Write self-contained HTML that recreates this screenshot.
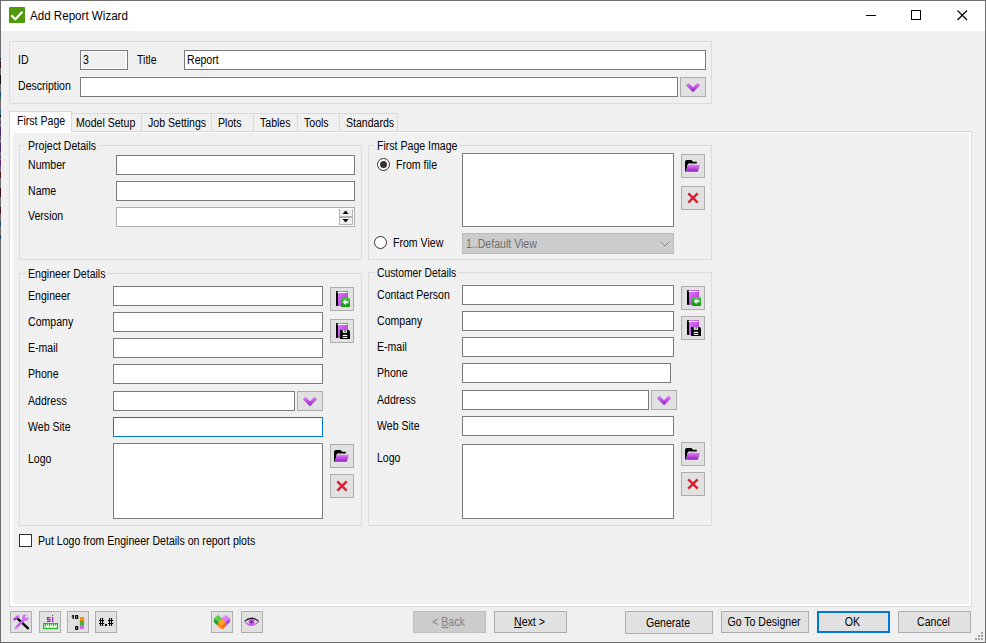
<!DOCTYPE html>
<html><head><meta charset="utf-8"><style>
*{box-sizing:border-box}
html,body{margin:0;padding:0}
body{width:986px;height:643px;position:relative;overflow:hidden;background:#f0f0f0;font-family:"Liberation Sans",sans-serif;color:#000}
div{position:absolute}
svg{position:absolute}
.l{font-size:12px;line-height:13px;white-space:nowrap;transform:scaleX(0.88);transform-origin:0 0}
.tb{background:#fff;border:1px solid #7a7a7a}
.btn{background:#e1e1e1;border:1px solid #adadad}
.grp{border:1px solid #dcdcdc}
.leg{height:3px;background:#f0f0f0}
.tab{background:#f0f0f0;border:1px solid #d9d9d9;border-bottom:none}
.rad{border:1px solid #333;border-radius:50%;background:#fff}
.bt{font-size:12px;line-height:13px;transform:scaleX(0.88);transform-origin:50% 0;white-space:nowrap;text-align:center;width:100%;left:-1px}
</style></head>
<body>
<svg width="0" height="0" style="left:0;top:0"><defs><linearGradient id="gp" x1="0" y1="0" x2="0" y2="1"><stop offset="0" stop-color="#e47cff"/><stop offset="1" stop-color="#9020c0"/></linearGradient><linearGradient id="gb" x1="0" y1="0" x2="1" y2="1"><stop offset="0" stop-color="#e078ff"/><stop offset="1" stop-color="#a830d0"/></linearGradient><linearGradient id="gg" x1="0" y1="0" x2="0" y2="1"><stop offset="0" stop-color="#48c848"/><stop offset="1" stop-color="#129012"/></linearGradient></defs></svg>
<div style="left:0;top:0;width:986px;height:643px;border:1px solid #6e6e6e"></div>
<div style="left:1px;top:1px;width:984px;height:30px;background:#fff"></div>
<div style="left:9px;top:7px;width:16px;height:16px;background:#4f9a0b;border-radius:1px"></div>
<svg style="left:9px;top:7px" width="16" height="16" viewBox="0 0 16 16"><path d="M2.35 8.4 L6.4 12.2 L13.4 4.7" stroke="#fff" stroke-width="2.2" fill="none"/></svg>
<div style="left:30px;top:10px;font-size:12px;line-height:13px;white-space:nowrap;transform:scaleX(0.966);transform-origin:0 0">Add Report Wizard</div>
<div style="left:866px;top:15px;width:10px;height:1px;background:#000"></div>
<div style="left:911px;top:10px;width:10px;height:10px;border:1px solid #000"></div>
<svg style="left:957px;top:10px" width="11" height="11" viewBox="0 0 11 11"><path d="M0.5 0.5 L10 10 M10 0.5 L0.5 10" stroke="#000" stroke-width="1.15" fill="none"/></svg>
<div class="grp" style="left:9px;top:41px;width:703px;height:63px"></div>
<div class="l" style="left:18px;top:54px;">ID</div>
<div class="tb" style="left:80px;top:50px;width:48px;height:20px;background:#f0f0f0;box-shadow:inset 0 0 0 1px #fff"></div>
<div class="l" style="left:83px;top:54px;">3</div>
<div class="l" style="left:137px;top:54px;">Title</div>
<div class="tb" style="left:184px;top:50px;width:522px;height:20px;"></div>
<div class="l" style="left:187px;top:54px;">Report</div>
<div class="l" style="left:18px;top:80px;">Description</div>
<div class="tb" style="left:80px;top:77px;width:598px;height:20px;"></div>
<div class="btn" style="left:680px;top:77px;width:26px;height:20px;"><svg width="26" height="20" viewBox="0 0 26 20" style="left:-1px;top:-1px"><path d="M6 8.5 L8.5 5.8 L13 10.3 L17.5 5.8 L20 8.5 L13 15.2 Z" fill="url(#gp)"/></svg></div>
<div style="left:9px;top:131px;width:963px;height:476px;border:1px solid #d9d9d9;background:#fff"></div>
<div style="left:13px;top:133px;width:956px;height:471px;background:#f0f0f0"></div>
<div class="tab" style="left:71px;top:113px;width:71px;height:18px"></div>
<div class="l" style="left:76px;top:117px;">Model Setup</div>
<div class="tab" style="left:141px;top:113px;width:71px;height:18px"></div>
<div class="l" style="left:148px;top:117px;">Job Settings</div>
<div class="tab" style="left:211px;top:113px;width:43px;height:18px"></div>
<div class="l" style="left:218px;top:117px;">Plots</div>
<div class="tab" style="left:253px;top:113px;width:45px;height:18px"></div>
<div class="l" style="left:260px;top:117px;">Tables</div>
<div class="tab" style="left:297px;top:113px;width:43px;height:18px"></div>
<div class="l" style="left:304px;top:117px;">Tools</div>
<div class="tab" style="left:339px;top:113px;width:59px;height:18px"></div>
<div class="l" style="left:346px;top:117px;">Standards</div>
<div style="left:9px;top:111px;width:63px;height:21px;background:#fff;border:1px solid #d9d9d9;border-bottom:none"></div>
<div style="left:10px;top:131px;width:61px;height:2px;background:#fff"></div>
<div class="l" style="left:17px;top:115px;">First Page</div>
<div class="grp" style="left:19px;top:145px;width:343px;height:115px"></div>
<div class="leg" style="left:26px;top:145px;width:72px"></div>
<div class="l" style="left:28px;top:140px;">Project Details</div>
<div class="l" style="left:28px;top:159px;">Number</div>
<div class="tb" style="left:116px;top:155px;width:239px;height:20px;"></div>
<div class="l" style="left:28px;top:185px;">Name</div>
<div class="tb" style="left:116px;top:181px;width:239px;height:20px;"></div>
<div class="l" style="left:28px;top:210px;">Version</div>
<div class="tb" style="left:116px;top:207px;width:239px;height:20px;border-color:#abadb3"></div>
<div style="left:339px;top:209px;width:14px;height:16px;background:#efefef;border:1px solid #b4b4b4;border-top:none"></div>
<div style="left:339px;top:216px;width:14px;height:2px;background:#b4b4b4"></div>
<svg style="left:339px;top:204px" width="14" height="22"><path d="M3.6 10 L9.6 10 L6.6 6.6 Z M3.6 15.1 L9.6 15.1 L6.6 18.4 Z" fill="#000"/></svg>
<div class="grp" style="left:368px;top:145px;width:344px;height:115px"></div>
<div class="leg" style="left:375px;top:145px;width:83px"></div>
<div class="l" style="left:377px;top:140px;">First Page Image</div>
<div class="rad" style="left:377px;top:158px;width:13px;height:13px"></div>
<div style="left:380px;top:161px;width:7px;height:7px;border-radius:50%;background:#333"></div>
<div class="l" style="left:396px;top:159px;">From file</div>
<div class="tb" style="left:462px;top:153px;width:212px;height:74px;"></div>
<div class="btn" style="left:681px;top:154px;width:24px;height:24px;"><svg width="24" height="24" viewBox="0 0 24 24" style="left:-1px;top:-1px"><path d="M4 17.5 L4 8 Q4 6 6 6 L10.5 6 L12 7.8 L15.8 7.8 L15.8 9.6 L7 9.6 L5 17.5 Z" fill="#000"/><path d="M6.6 10.8 L19 10.8 L16.8 17.7 L5 17.7 Z" fill="url(#gp)"/></svg></div>
<div class="btn" style="left:681px;top:186px;width:24px;height:24px;"><svg width="24" height="24" viewBox="0 0 24 24" style="left:-1px;top:-1px"><path d="M7.3 7.3 L16.7 16.7 M16.7 7.3 L7.3 16.7" stroke="#d81e32" stroke-width="2.4" fill="none"/></svg></div>
<div class="rad" style="left:374px;top:236px;width:13px;height:13px"></div>
<div class="l" style="left:393px;top:237px;">From View</div>
<div class="" style="left:462px;top:233px;width:212px;height:21px;background:#cccccc;border:1px solid #bcbcbc"></div>
<div class="l" style="left:466px;top:238px;color:#6d6d6d">1..Default View</div>
<svg style="left:660px;top:240px" width="10" height="8"><path d="M0.5 1.5 L5 6 L9.5 1.5" stroke="#8a8a8a" fill="none"/></svg>
<div class="grp" style="left:19px;top:273px;width:343px;height:253px"></div>
<div class="leg" style="left:26px;top:273px;width:81px"></div>
<div class="l" style="left:28px;top:268px;">Engineer Details</div>
<div class="l" style="left:28px;top:290px;">Engineer</div>
<div class="tb" style="left:113px;top:286px;width:210px;height:20px;"></div>
<div class="l" style="left:28px;top:316px;">Company</div>
<div class="tb" style="left:113px;top:312px;width:210px;height:20px;"></div>
<div class="l" style="left:28px;top:342px;">E-mail</div>
<div class="tb" style="left:113px;top:338px;width:210px;height:20px;"></div>
<div class="l" style="left:28px;top:368px;">Phone</div>
<div class="tb" style="left:113px;top:364px;width:210px;height:20px;"></div>
<div class="l" style="left:28px;top:395px;">Address</div>
<div class="tb" style="left:113px;top:391px;width:182px;height:20px;"></div>
<div class="btn" style="left:297px;top:391px;width:26px;height:20px;"><svg width="26" height="20" viewBox="0 0 26 20" style="left:-1px;top:-1px"><path d="M6 8.5 L8.5 5.8 L13 10.3 L17.5 5.8 L20 8.5 L13 15.2 Z" fill="url(#gp)"/></svg></div>
<div class="l" style="left:28px;top:421px;">Web Site</div>
<div class="tb" style="left:113px;top:417px;width:210px;height:20px;border-color:#0078d7"></div>
<div class="l" style="left:28px;top:453px;">Logo</div>
<div class="tb" style="left:113px;top:443px;width:210px;height:76px;"></div>
<div class="btn" style="left:330px;top:287px;width:24px;height:24px;"><svg width="24" height="24" viewBox="0 0 24 24" style="left:-1px;top:-1px"><rect x="6" y="4" width="2.2" height="15" rx="0.8" fill="#000"/><rect x="8" y="4" width="10" height="15" fill="url(#gb)"/><rect x="7.5" y="5" width="9.7" height="1" fill="#fff"/><rect x="11" y="11" width="9" height="9" rx="0.8" fill="url(#gg)"/><path d="M12.8 15.3 L15.6 12.3 L15.6 14.3 L18.4 14.3 L18.4 16.3 L15.6 16.3 L15.6 18.3 Z" fill="#fff"/></svg></div>
<div class="btn" style="left:330px;top:319px;width:24px;height:24px;"><svg width="24" height="24" viewBox="0 0 24 24" style="left:-1px;top:-1px"><rect x="6" y="4" width="2.2" height="15" rx="0.8" fill="#000"/><rect x="8" y="4" width="10" height="15" fill="url(#gb)"/><rect x="7.5" y="5" width="9.7" height="1" fill="#fff"/><path d="M10 11 L18.8 11 L20 12.2 L20 20 L10 20 Z" fill="#000"/><rect x="12.8" y="11" width="4.2" height="2.8" fill="#fff"/><rect x="14.6" y="11" width="1" height="2" fill="#000"/><rect x="12.8" y="15.8" width="4.4" height="3.2" fill="#fff"/><rect x="12.8" y="17" width="4.4" height="0.9" fill="#000"/></svg></div>
<div class="btn" style="left:330px;top:444px;width:24px;height:24px;"><svg width="24" height="24" viewBox="0 0 24 24" style="left:-1px;top:-1px"><path d="M4 17.5 L4 8 Q4 6 6 6 L10.5 6 L12 7.8 L15.8 7.8 L15.8 9.6 L7 9.6 L5 17.5 Z" fill="#000"/><path d="M6.6 10.8 L19 10.8 L16.8 17.7 L5 17.7 Z" fill="url(#gp)"/></svg></div>
<div class="btn" style="left:330px;top:474px;width:24px;height:24px;"><svg width="24" height="24" viewBox="0 0 24 24" style="left:-1px;top:-1px"><path d="M7.3 7.3 L16.7 16.7 M16.7 7.3 L7.3 16.7" stroke="#d81e32" stroke-width="2.4" fill="none"/></svg></div>
<div class="grp" style="left:368px;top:272px;width:344px;height:254px"></div>
<div class="leg" style="left:375px;top:272px;width:83px"></div>
<div class="l" style="left:377px;top:267px;transform:scaleX(0.86)">Customer Details</div>
<div class="l" style="left:377px;top:289px;">Contact Person</div>
<div class="tb" style="left:462px;top:285px;width:212px;height:20px;"></div>
<div class="l" style="left:377px;top:315px;">Company</div>
<div class="tb" style="left:462px;top:311px;width:212px;height:20px;"></div>
<div class="l" style="left:377px;top:341px;">E-mail</div>
<div class="tb" style="left:462px;top:337px;width:212px;height:20px;"></div>
<div class="l" style="left:377px;top:367px;">Phone</div>
<div class="tb" style="left:462px;top:363px;width:209px;height:20px;"></div>
<div class="l" style="left:377px;top:394px;">Address</div>
<div class="tb" style="left:462px;top:390px;width:187px;height:20px;"></div>
<div class="btn" style="left:651px;top:390px;width:26px;height:20px;"><svg width="26" height="20" viewBox="0 0 26 20" style="left:-1px;top:-1px"><path d="M6 8.5 L8.5 5.8 L13 10.3 L17.5 5.8 L20 8.5 L13 15.2 Z" fill="url(#gp)"/></svg></div>
<div class="l" style="left:377px;top:420px;">Web Site</div>
<div class="tb" style="left:462px;top:416px;width:212px;height:20px;"></div>
<div class="l" style="left:377px;top:452px;">Logo</div>
<div class="tb" style="left:462px;top:444px;width:212px;height:75px;"></div>
<div class="btn" style="left:681px;top:286px;width:24px;height:24px;"><svg width="24" height="24" viewBox="0 0 24 24" style="left:-1px;top:-1px"><rect x="6" y="4" width="2.2" height="15" rx="0.8" fill="#000"/><rect x="8" y="4" width="10" height="15" fill="url(#gb)"/><rect x="7.5" y="5" width="9.7" height="1" fill="#fff"/><rect x="11" y="11" width="9" height="9" rx="0.8" fill="url(#gg)"/><path d="M12.8 15.3 L15.6 12.3 L15.6 14.3 L18.4 14.3 L18.4 16.3 L15.6 16.3 L15.6 18.3 Z" fill="#fff"/></svg></div>
<div class="btn" style="left:681px;top:316px;width:24px;height:24px;"><svg width="24" height="24" viewBox="0 0 24 24" style="left:-1px;top:-1px"><rect x="6" y="4" width="2.2" height="15" rx="0.8" fill="#000"/><rect x="8" y="4" width="10" height="15" fill="url(#gb)"/><rect x="7.5" y="5" width="9.7" height="1" fill="#fff"/><path d="M10 11 L18.8 11 L20 12.2 L20 20 L10 20 Z" fill="#000"/><rect x="12.8" y="11" width="4.2" height="2.8" fill="#fff"/><rect x="14.6" y="11" width="1" height="2" fill="#000"/><rect x="12.8" y="15.8" width="4.4" height="3.2" fill="#fff"/><rect x="12.8" y="17" width="4.4" height="0.9" fill="#000"/></svg></div>
<div class="btn" style="left:681px;top:442px;width:24px;height:24px;"><svg width="24" height="24" viewBox="0 0 24 24" style="left:-1px;top:-1px"><path d="M4 17.5 L4 8 Q4 6 6 6 L10.5 6 L12 7.8 L15.8 7.8 L15.8 9.6 L7 9.6 L5 17.5 Z" fill="#000"/><path d="M6.6 10.8 L19 10.8 L16.8 17.7 L5 17.7 Z" fill="url(#gp)"/></svg></div>
<div class="btn" style="left:681px;top:472px;width:24px;height:24px;"><svg width="24" height="24" viewBox="0 0 24 24" style="left:-1px;top:-1px"><path d="M7.3 7.3 L16.7 16.7 M16.7 7.3 L7.3 16.7" stroke="#d81e32" stroke-width="2.4" fill="none"/></svg></div>
<div style="left:19px;top:534px;width:13px;height:13px;border:1px solid #333;background:#fff"></div>
<div class="l" style="left:38px;top:535px;">Put Logo from Engineer Details on report plots</div>
<div class="btn" style="left:10px;top:611px;width:22px;height:22px;"><svg width="22" height="22" viewBox="0 0 22 22" style="left:-1px;top:-1px"><path d="M7.4 7.4 L18.6 17.8" stroke="#000" stroke-width="2.3"/><path d="M3.7 8.9 L8.9 4.4" stroke="url(#gp)" stroke-width="2.4"/><path d="M4.6 7 L6.2 8.6 M6.2 5.6 L7.8 7.2" stroke="#b040d8" stroke-width="0.6"/><path d="M5.7 16.9 L13.2 9.6" stroke="#c860f0" stroke-width="2.5" stroke-linecap="round"/><circle cx="15.3" cy="6.8" r="3.2" fill="#d070f8"/><path d="M15.5 6.6 L19.4 2.8" stroke="#e1e1e1" stroke-width="2.3"/><circle cx="5.9" cy="16.6" r="0.8" fill="#e1e1e1"/></svg></div>
<div class="btn" style="left:39px;top:611px;width:22px;height:22px;"><svg width="22" height="22" viewBox="0 0 22 22" style="left:-1px;top:-1px"><path d="M7.9 6 H11.5 V7.2 H9.1 V7.9 H11.5 V11 H7.9 V9.8 H10.3 V9.1 H7.9 Z" fill="#a020c8"/><rect x="13" y="4" width="1.2" height="1.1" fill="#a020c8"/><rect x="13" y="6" width="1.2" height="5" fill="#a020c8"/><rect x="4.6" y="12.6" width="13.8" height="4.8" fill="#fff" stroke="#1ec01e" stroke-width="1.3"/><path d="M6.5 13 V15.6 M8.5 13 V14.6 M10.5 13 V15.6 M12.5 13 V14.6 M14.5 13 V15.6 M16.5 13 V14.6" stroke="#1ec01e" stroke-width="1.1"/></svg></div>
<div class="btn" style="left:67px;top:611px;width:22px;height:22px;"><svg width="22" height="22" viewBox="0 0 22 22" style="left:-1px;top:-1px"><path d="M5.6 4.1 H6.9 V8 H5.6 V5.6 L4.8 5.9 V5 Z" fill="#000"/><path fill-rule="evenodd" d="M8.9 4.1 H10.4 Q11.3 4.1 11.3 5 V7.1 Q11.3 8 10.4 8 H8.9 Q8 8 8 7.1 V5 Q8 4.1 8.9 4.1 Z M9.2 5.3 V6.8 H10.1 V5.3 Z" fill="#000"/><path fill-rule="evenodd" d="M8.9 15 H10.4 Q11.3 15 11.3 15.9 V18.1 Q11.3 19 10.4 19 H8.9 Q8 19 8 18.1 V15.9 Q8 15 8.9 15 Z M9.2 16.2 V17.8 H10.1 V16.2 Z" fill="#000"/><rect x="12.8" y="6" width="4.3" height="3.9" fill="#ff8c00"/><rect x="12.8" y="9.9" width="4.3" height="4.1" fill="#3cb83c"/><rect x="12.8" y="14" width="4.3" height="4" fill="#d860f0"/></svg></div>
<div class="btn" style="left:95px;top:611px;width:22px;height:22px;"><svg width="22" height="22" viewBox="0 0 22 22" style="left:-1px;top:-1px"><rect x="5" y="7" width="1.1" height="8" fill="#000"/><rect x="7" y="7" width="1.1" height="8" fill="#000"/><rect x="4" y="9" width="5.2" height="1" fill="#000"/><rect x="4" y="12" width="5.2" height="1" fill="#000"/><rect x="14" y="7" width="1.1" height="8" fill="#000"/><rect x="16" y="7" width="1.1" height="8" fill="#000"/><rect x="13" y="9" width="5.2" height="1" fill="#000"/><rect x="13" y="12" width="5.2" height="1" fill="#000"/><rect x="10" y="13" width="2" height="2" fill="#000"/></svg></div>
<div class="btn" style="left:211px;top:611px;width:22px;height:22px;"><svg width="22" height="22" viewBox="0 0 22 22" style="left:-1px;top:-1px"><polygon points="7.00,4.10 10.95,7.20 7.00,10.30 3.05,7.20" fill="#5ccc4c"/><polygon points="3.05,7.20 7.00,10.30 7.00,14.70 3.05,11.60" fill="#26a026"/><polygon points="7.00,10.30 10.95,7.20 10.95,11.60 7.00,14.70" fill="#38b438"/><polygon points="14.90,4.10 18.85,7.20 14.90,10.30 10.95,7.20" fill="#e27cff"/><polygon points="10.95,7.20 14.90,10.30 14.90,14.70 10.95,11.60" fill="#c058e8"/><polygon points="14.90,10.30 18.85,7.20 18.85,11.60 14.90,14.70" fill="#a848d8"/><polygon points="11.00,8.00 14.95,11.10 11.00,14.20 7.05,11.10" fill="#ffa824"/><polygon points="7.05,11.10 11.00,14.20 11.00,18.60 7.05,15.50" fill="#ff8a10"/><polygon points="11.00,14.20 14.95,11.10 14.95,15.50 11.00,18.60" fill="#f27414"/></svg></div>
<div class="btn" style="left:241px;top:611px;width:22px;height:22px;"><svg width="22" height="22" viewBox="0 0 22 22" style="left:-1px;top:-1px"><path d="M3.6 10.4 Q10.6 4.1 17.7 10.4" stroke="#222" stroke-width="1.2" fill="none"/><path d="M3.6 10.4 Q10.6 18.4 17.7 10.4" stroke="#c050e8" stroke-width="1.1" fill="none"/><circle cx="10.6" cy="11" r="3" fill="#c050e8"/><circle cx="10.6" cy="11" r="1" fill="#333"/></svg></div>
<div class="btn" style="left:413px;top:611px;width:73px;height:22px;background:#cccccc;border-color:#bfbfbf"><div class="bt" style="top:4px;color:#838383">&lt; <u>B</u>ack</div></div>
<div class="btn" style="left:494px;top:611px;width:73px;height:22px;"><div class="bt" style="top:4px;"><u>N</u>ext &gt;</div></div>
<div class="btn" style="left:625px;top:611px;width:88px;height:23px;"><div class="bt" style="top:4px;top:5px">Generate</div></div>
<div class="btn" style="left:721px;top:611px;width:88px;height:22px;"><div class="bt" style="top:4px;">Go To Designer</div></div>
<div class="btn" style="left:817px;top:611px;width:73px;height:22px;border:2px solid #0078d7"><div class="bt" style="top:4px;top:3px">OK</div></div>
<div class="btn" style="left:898px;top:611px;width:73px;height:22px;"><div class="bt" style="top:4px;">Cancel</div></div>
<div style="left:981px;top:632px;width:2px;height:2px;background:#a0a0a0"></div>
<div style="left:978px;top:635px;width:2px;height:2px;background:#a0a0a0"></div>
<div style="left:981px;top:635px;width:2px;height:2px;background:#a0a0a0"></div>
<div style="left:975px;top:638px;width:2px;height:2px;background:#a0a0a0"></div>
<div style="left:978px;top:638px;width:2px;height:2px;background:#a0a0a0"></div>
<div style="left:981px;top:638px;width:2px;height:2px;background:#a0a0a0"></div>
<div style="left:0;top:58px;width:1px;height:2px;background:#1a3a6a"></div>
<div style="left:0;top:61px;width:1px;height:7px;background:#4a1a20"></div>
<div style="left:0;top:75px;width:1px;height:9px;background:#101010"></div>
<div style="left:0;top:92px;width:1px;height:4px;background:#1a4a7a"></div>
<div style="left:0;top:96px;width:1px;height:4px;background:#2a6a5a"></div>
<div style="left:0;top:110px;width:1px;height:6px;background:#2a6a8a"></div>
<div style="left:0;top:115px;width:1px;height:2px;background:#101010"></div>
<div style="left:0;top:121px;width:1px;height:2px;background:#5a3a80"></div>
<div style="left:0;top:127px;width:1px;height:9px;background:#4a2a70"></div>
<div style="left:0;top:137px;width:1px;height:2px;background:#5a3a80"></div>
<div style="left:0;top:143px;width:1px;height:9px;background:#4a2a70"></div>
<div style="left:0;top:156px;width:1px;height:2px;background:#5a3a80"></div>
<div style="left:0;top:160px;width:1px;height:7px;background:#5a2a80"></div>
<div style="left:0;top:172px;width:1px;height:6px;background:#4a1a20"></div>
<div style="left:0;top:188px;width:1px;height:9px;background:#3a1018"></div>
<div style="left:0;top:207px;width:1px;height:7px;background:#4a1a20"></div>
<div style="left:0;top:221px;width:1px;height:5px;background:#1a4a6a"></div>
<div style="left:0;top:235px;width:1px;height:4px;background:#1a3a6a"></div>
</body></html>
